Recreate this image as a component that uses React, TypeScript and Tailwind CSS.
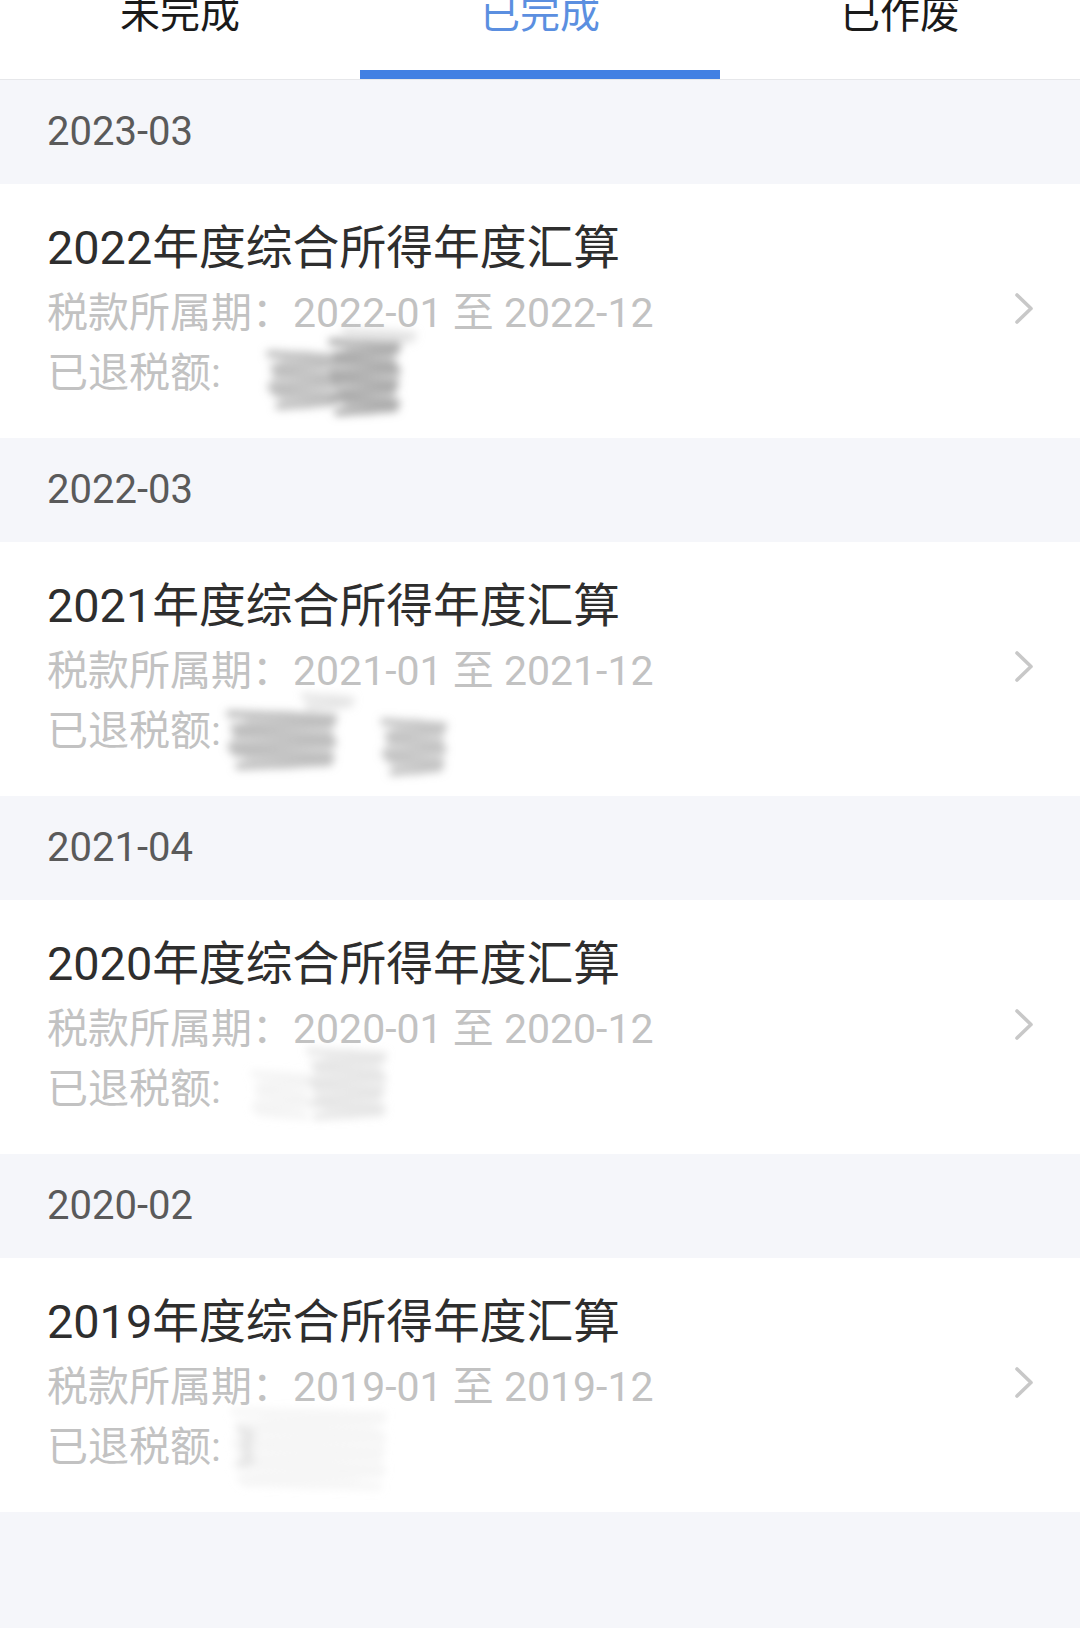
import React from "react";

type Blob = { x: number; y: number; w: number; h: number; c: string; o: number };

const items: { date: string; year: string; blobs: Blob[] }[] = [
  {
    date: "2023-03",
    year: "2022",
    blobs: [
      { x: 50, y: 28, w: 66, h: 58, c: "#b0b0b0", o: 0.8 },
      { x: 112, y: 16, w: 66, h: 76, c: "#9e9e9e", o: 0.85 },
      { x: 124, y: 6, w: 70, h: 16, c: "#c8c8c8", o: 0.5 },
    ],
  },
  {
    date: "2022-03",
    year: "2021",
    blobs: [
      { x: 10, y: 30, w: 104, h: 58, c: "#a8a8a8", o: 0.75 },
      { x: 84, y: 13, w: 48, h: 16, c: "#cccccc", o: 0.5 },
      { x: 164, y: 38, w: 60, h: 56, c: "#acacac", o: 0.7 },
    ],
  },
  {
    date: "2021-04",
    year: "2020",
    blobs: [
      { x: 90, y: 10, w: 74, h: 70, c: "#cdcdcd", o: 0.5 },
      { x: 34, y: 32, w: 54, h: 48, c: "#e0e0e0", o: 0.35 },
    ],
  },
  {
    date: "2020-02",
    year: "2019",
    blobs: [
      { x: 14, y: 12, w: 150, h: 80, c: "#e6e6e6", o: 0.4 },
      { x: 20, y: 30, w: 12, h: 40, c: "#cccccc", o: 0.4 },
    ],
  },
];

function Smudge({ id, blobs }: { id: number; blobs: Blob[] }) {
  return (
    <svg width="260" height="100" viewBox="0 0 260 100" className="-my-[20px] shrink-0 overflow-visible">
      <defs>
        <filter id={`blur${id}`} x="-40%" y="-40%" width="180%" height="180%">
          <feGaussianBlur stdDeviation="4.5" />
        </filter>
      </defs>
      <g filter={`url(#blur${id})`}>
        {blobs.map((b, i) => {
          const n = Math.max(2, Math.round(b.h / 9));
          const step = b.h / n;
          return (
            <g key={i} opacity={b.o}>
              <ellipse cx={b.x + b.w / 2} cy={b.y + b.h / 2} rx={b.w / 2} ry={b.h / 2} fill={b.c} opacity={0.55} />
              {Array.from({ length: n }).map((_, k) => {
                const y = b.y + step * (k + 0.5);
                const jitter = ((k * 37) % 11) - 5;
                return (
                  <line
                    key={k}
                    x1={b.x + 4 + jitter}
                    y1={y + (k % 2 ? 2 : -2)}
                    x2={b.x + b.w - 4 - jitter / 2}
                    y2={y - (k % 2 ? 2 : -2)}
                    stroke={b.c}
                    strokeWidth={step * 0.8}
                    strokeLinecap="round"
                  />
                );
              })}
            </g>
          );
        })}
      </g>
    </svg>
  );
}

function Chevron() {
  return (
    <svg width="22" height="34" viewBox="0 0 22 34" className="shrink-0">
      <polyline points="4,3 18,16.5 4,30" fill="none" stroke="#c8c8c8" strokeWidth="3.6" strokeLinecap="round" strokeLinejoin="round" />
    </svg>
  );
}

export default function App() {
  return (
    <div className="min-h-[1628px] w-[1080px] bg-[#f5f6fa] font-[Roboto,'Noto_Sans_CJK_SC',sans-serif]">
      <div className="flex h-[80px] overflow-hidden border-b border-[#e6e7ea] bg-white">
        {["未完成", "已完成", "已作废"].map((t, i) => (
          <div key={t} className="flex w-1/3 flex-col items-center">
            <div
              className={`-mt-[5px] text-[40px] leading-[40px] ${i === 1 ? "text-[#5b8fe0]" : "text-[#1a1a1a]"}`}
            >
              {t}
            </div>
            {i === 1 && <div className="mt-auto h-[9px] w-full bg-[#4280e3]" />}
          </div>
        ))}
      </div>
      {items.map((it, idx) => (
        <div key={it.date}>
          <div className="h-[104px] pl-[47px] pt-[32px]">
            <div className="text-[40px] leading-[40px] text-[#5a5a5a]">{it.date}</div>
          </div>
          <div className="flex h-[254px] items-center bg-white pl-[47px] pr-[45px]">
            <div className="flex flex-1 flex-col self-stretch pt-[36px]">
              <div className="text-[46.8px] leading-[56px] text-[#2e2e2e]">
                {it.year}年度综合所得年度汇算
              </div>
              <div className="mt-[7px] text-[41px] leading-[60px] text-[#c2c2c2]">
                税款所属期：{it.year}-01 至 {it.year}-12
              </div>
              <div className="flex h-[60px] items-center text-[41px] leading-[60px] text-[#c2c2c2]">
                <span>已退税额:</span>
                <Smudge id={idx} blobs={it.blobs} />
              </div>
            </div>
            <div className="-mt-[4px]">
              <Chevron />
            </div>
          </div>
        </div>
      ))}
    </div>
  );
}
